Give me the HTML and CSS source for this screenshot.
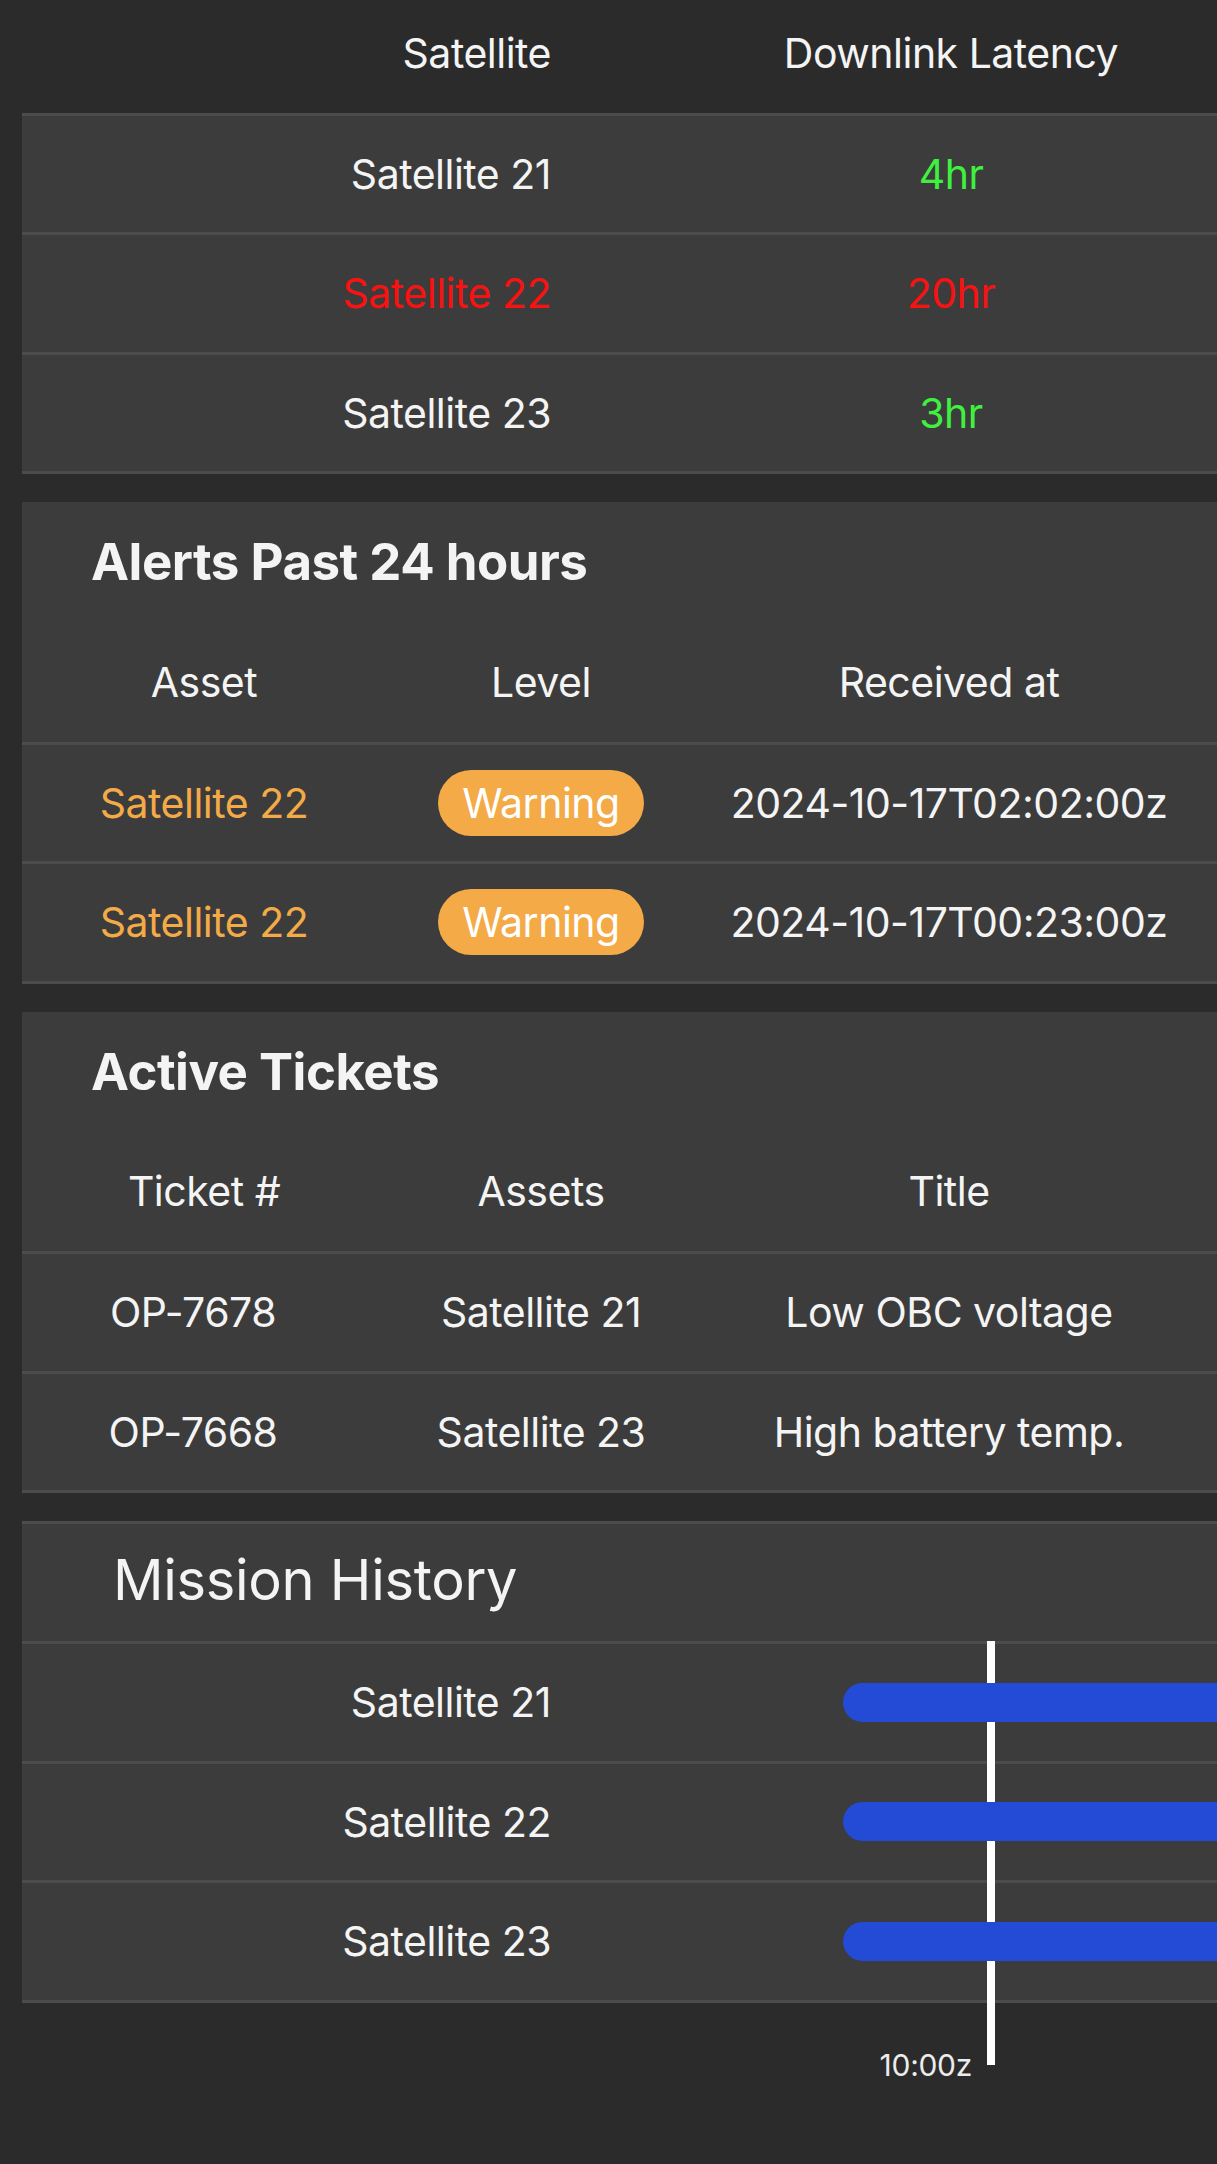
FILE: index.html
```html
<!DOCTYPE html>
<html>
<head>
    <link rel="stylesheet" href="styles.css">
</head>
<body>

<div class="page">

    <section class="latency">
        <div class="row two head">
            <div class="label">Satellite</div>
            <div class="value">Downlink Latency</div>
        </div>
        <div class="rows">
            <div class="row two">
                <div class="label">Satellite 21</div>
                <div class="value good">4hr</div>
            </div>
            <div class="row two">
                <div class="label bad">Satellite 22</div>
                <div class="value bad">20hr</div>
            </div>
            <div class="row two">
                <div class="label">Satellite 23</div>
                <div class="value good">3hr</div>
            </div>
        </div>
    </section>

    <section class="card">
        <h2 class="card-title">Alerts Past 24 hours</h2>
        <div class="row three head">
            <div>Asset</div>
            <div>Level</div>
            <div>Received at</div>
        </div>
        <div class="rows">
            <div class="row three">
                <div class="warn">Satellite 22</div>
                <div><span class="badge">Warning</span></div>
                <div>2024-10-17T02:02:00z</div>
            </div>
            <div class="row three">
                <div class="warn">Satellite 22</div>
                <div><span class="badge">Warning</span></div>
                <div>2024-10-17T00:23:00z</div>
            </div>
        </div>
    </section>

    <section class="card">
        <h2 class="card-title">Active Tickets</h2>
        <div class="row three head">
            <div>Ticket #</div>
            <div>Assets</div>
            <div>Title</div>
        </div>
        <div class="rows">
            <div class="row three">
                <div class="ticket">OP-7678</div>
                <div>Satellite 21</div>
                <div>Low OBC voltage</div>
            </div>
            <div class="row three">
                <div class="ticket">OP-7668</div>
                <div>Satellite 23</div>
                <div>High battery temp.</div>
            </div>
        </div>
    </section>

    <section class="card history">
        <h2 class="history-title">Mission History</h2>
        <div class="now-line"></div>
        <div class="now-label">10:00z</div>
        <div class="rows">
            <div class="row two">
                <div class="label">Satellite 21</div>
                <div class="track"><div class="bar"></div></div>
            </div>
            <div class="row two">
                <div class="label">Satellite 22</div>
                <div class="track"><div class="bar"></div></div>
            </div>
            <div class="row two">
                <div class="label">Satellite 23</div>
                <div class="track"><div class="bar"></div></div>
            </div>
        </div>
    </section>

</div>

</body>
</html>
```

FILE: styles.css
```css
body {
    font-family: Inter, "Noto Sans", sans-serif;
    margin: 0;
    padding: 0;
    background: #2b2b2b;
    color: #f4f4f4;
}
.page {
    padding-left: 22px;
    padding-bottom: 170px;
    overflow: hidden;
}
.latency {
    margin-top: -7px;
}
.card {
    background: #3c3c3c;
    margin-top: 28px;
    position: relative;
}
.rows {
    background: #3c3c3c;
    border-bottom: 3px solid #4c4c4c;
}
.row {
    display: grid;
    align-items: center;
    box-sizing: border-box;
    height: 119.5px;
    font-size: 41px;
    letter-spacing: -0.5px;
    line-height: 50px;
    white-space: nowrap;
}
.rows .row {
    border-top: 3px solid #4c4c4c;
}
.row.two {
    grid-template-columns: 529px 1fr;
}
.row.three {
    grid-template-columns: 364px 310px 506px;
    text-align: center;
}
.label {
    text-align: right;
}
.value {
    text-align: center;
    padding-left: 134px;
}
.good {
    color: #3ff03f;
}
.bad {
    color: #f81212;
}
.warn {
    color: #f3aa47;
}
.ticket {
    padding-right: 22px;
}
.badge {
    display: inline-block;
    background: #f3aa47;
    color: #fff;
    padding: 8px 24px;
    border-radius: 33px;
}
.card-title {
    margin: 0;
    height: 120px;
    line-height: 120px;
    padding-left: 69px;
    font-size: 51px;
    letter-spacing: -0.5px;
    font-weight: 700;
}
.history {
    border-top: 3px solid #4c4c4c;
}
.history-title {
    margin: 0;
    height: 117px;
    line-height: 112px;
    padding-left: 91px;
    font-size: 56px;
    letter-spacing: -0.3px;
    font-weight: 400;
}
.track {
    padding-left: 292px;
}
.bar {
    position: relative;
    z-index: 1;
    height: 39px;
    background: #234bd6;
    border-radius: 20px 0 0 20px;
}
.now-line {
    position: absolute;
    left: 965px;
    top: 117px;
    width: 8px;
    height: 424px;
    background: #fff;
}
.now-label {
    position: absolute;
    right: 245px;
    top: 526px;
    font-size: 30px;
    line-height: 30px;
    letter-spacing: -0.3px;
    color: #ececec;
}
```
